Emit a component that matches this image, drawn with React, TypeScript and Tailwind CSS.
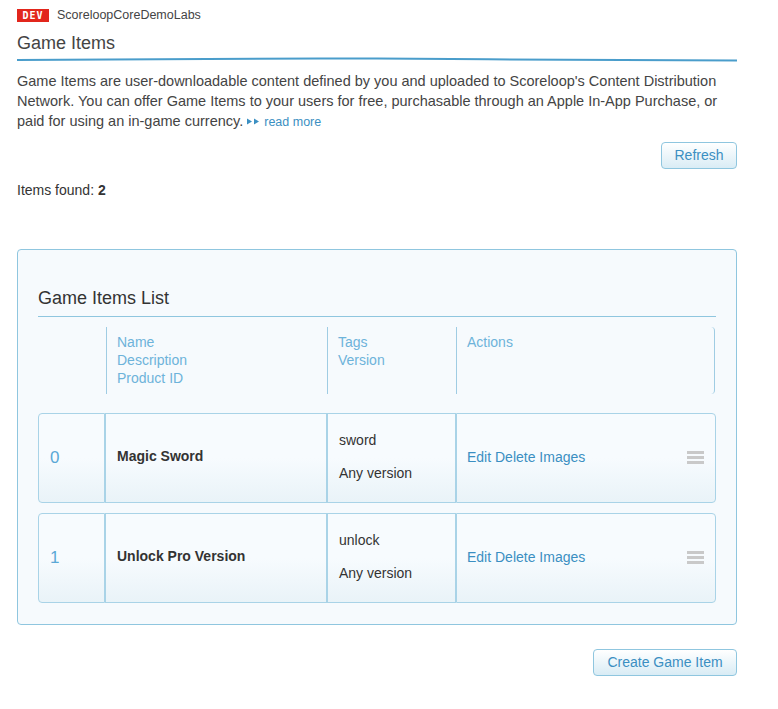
import React from 'react'

const rows = [
  { id: 0, name: 'Magic Sword', tag: 'sword', version: 'Any version' },
  { id: 1, name: 'Unlock Pro Version', tag: 'unlock', version: 'Any version' },
]

const cellBg =
  'bg-[linear-gradient(to_bottom,#f7fbfe_0%,#f7fbfe_50%,#e9f3f8_100%)] border border-[#a9d3e7]'

function BlueButton({ children, className = '' }: { children: React.ReactNode; className?: string }) {
  return (
    <button
      className={`h-[27px] rounded-[4px] border border-[#8fc6df] bg-[linear-gradient(to_bottom,#ffffff,#d9ecf5)] text-[14px] text-[#3b8fc2] ${className}`}
    >
      {children}
    </button>
  )
}

function Handle() {
  return (
    <div className="flex flex-col gap-[2px]">
      <div className="h-[3px] w-[17px] bg-[#c9c9c9]" />
      <div className="h-[3px] w-[17px] bg-[#c9c9c9]" />
      <div className="h-[3px] w-[17px] bg-[#c9c9c9]" />
    </div>
  )
}

export default function App() {
  return (
    <div className="w-[778px] h-[709px] bg-white pl-[17px] pr-[41px] pt-[8px] font-['Liberation_Sans',Arial,sans-serif] text-[#333]">
      {/* Header */}
      <div className="flex items-center gap-[8px] h-[14px]">
        <span className="h-[13px] w-[32px] bg-[#e2261c] text-white text-[10px] font-bold leading-[13px] text-center tracking-[1px] font-['DejaVu_Sans_Mono',monospace]">
          DEV
        </span>
        <span className="text-[12.5px] text-[#444]">ScoreloopCoreDemoLabs</span>
      </div>
      <h1 className="mt-[10px] text-[18px] leading-[22px] text-[#444]">Game Items</h1>
      <svg className="block mt-[3px]" width="720" height="6" viewBox="0 0 720 6">
        <path
          d="M0 3 C 120 2.2, 240 1.2, 360 1.6 S 560 3.8, 720 3.6"
          stroke="#4a9dcb"
          strokeWidth="2"
          fill="none"
        />
      </svg>

      <p className="mt-[8px] text-[14.5px] leading-[20px] text-[#444]">
        Game Items are user-downloadable content defined by you and uploaded to Scoreloop's Content Distribution
        Network. You can offer Game Items to your users for free, purchasable through an Apple In-App Purchase, or
        paid for using an in-game currency.{' '}
        <a className="text-[12.5px] text-[#3b8fc2] whitespace-nowrap">
          <svg className="inline-block mr-[4px] align-[1px]" width="13" height="7" viewBox="0 0 13 7">
            <path d="M0 0.5 L5 3.5 L0 6.5 Z M7 0.5 L12 3.5 L7 6.5 Z" fill="#3b8fc2" />
          </svg>
          read more
        </a>
      </p>

      <div className="flex justify-end mt-[10px]">
        <BlueButton className="w-[76px]">Refresh</BlueButton>
      </div>

      <div className="mt-[11px] text-[14px]">
        Items found: <b>2</b>
      </div>

      {/* Panel */}
      <div className="mt-[48px] h-[376px] rounded-[4px] border border-[#8fc6df] bg-[#f6fafd] px-[20px] pt-[37px]">
        <h2 className="text-[18px] leading-[22px] text-[#333]">Game Items List</h2>
        <div className="mt-[7px] border-t border-[#8fc6df]" />

        <div className="mx-[1px] flex h-[67px] mt-[10px] text-[14px] leading-[18px] text-[#6db3da]">
          <div className="w-[67px]" />
          <div className="w-[221px] border-l border-[#9fcce3] pl-[10px] pt-[6px]">
            <div>Name</div>
            <div>Description</div>
            <div>Product ID</div>
          </div>
          <div className="w-[129px] border-l border-[#9fcce3] pl-[10px] pt-[6px]">
            <div>Tags</div>
            <div>Version</div>
          </div>
          <div className="flex-1 border-l border-[#9fcce3] border-r rounded-r-[4px] pl-[10px] pt-[6px]">Actions</div>
        </div>

        <div className="mt-[19px] flex flex-col gap-[10px]">
          {rows.map((r) => (
            <div key={r.id} className="flex h-[90px] text-[14px]">
              <div className={`${cellBg} w-[67px] rounded-l-[4px] flex items-center pl-[11px] text-[17px] text-[#5aa8d6]`}>
                {r.id}
              </div>
              <div className={`${cellBg} w-[222px] flex items-center pl-[11px] font-bold text-[#333] pb-[4px]`}>
                {r.name}
              </div>
              <div className={`${cellBg} w-[129px] flex flex-col justify-center gap-[12px] pl-[11px] text-[#333] pb-[2px]`}>
                <div>{r.tag}</div>
                <div>{r.version}</div>
              </div>
              <div className={`${cellBg} flex-1 rounded-r-[4px] flex items-center justify-between pl-[10px] pr-[11px] pb-[1px] text-[#3b8fc2]`}>
                <span>Edit Delete Images</span>
                <Handle />
              </div>
            </div>
          ))}
        </div>
      </div>

      <div className="flex justify-end mt-[24px]">
        <BlueButton className="w-[144px]">Create Game Item</BlueButton>
      </div>
    </div>
  )
}
